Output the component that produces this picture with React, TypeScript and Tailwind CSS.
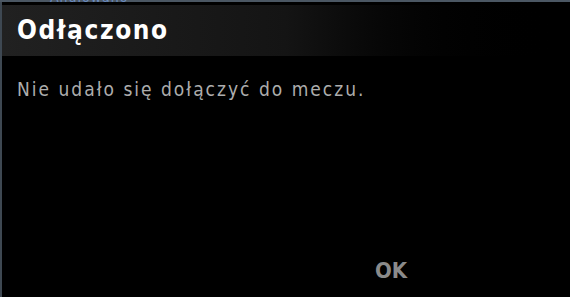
import React from "react";

const App = () => {
    return (
        <div className="w-[570px] h-[297px] bg-black flex flex-col overflow-hidden">
            <div className="h-[2px] bg-[#4b5763] relative">
                <span
                    className="absolute left-[50px] top-[-13px] text-[14px] tracking-[1px] text-[#6a8cc0]"
                    style={{ fontFamily: "'DejaVu Sans Condensed', 'DejaVu Sans', sans-serif" }}
                >
                    Anulowano
                </span>
            </div>
            <div className="flex-1 flex border-l-2 border-[#3e4852]">
                <div className="flex-1 flex flex-col pt-[3px]">
                    <div className="h-[51px] flex items-center pl-[15px] bg-gradient-to-r from-[#212121] via-[#141414] to-black">
                        <span
                            className="text-[26px] font-bold text-white tracking-[1.6px]"
                            style={{ fontFamily: "'DejaVu Sans Condensed', 'DejaVu Sans', sans-serif" }}
                        >
                            Odłączono
                        </span>
                    </div>
                    <div
                        className="pl-[15px] pt-[19px] text-[19px] tracking-[2px] text-[#adadad]"
                        style={{ fontFamily: "'DejaVu Sans Condensed', 'DejaVu Sans', sans-serif" }}
                    >
                        Nie udało się dołączyć do meczu.
                    </div>
                    <div className="flex-1" />
                    <div className="flex pl-[373px] pb-[10px]">
                        <span
                            className="text-[22px] font-bold text-[#8a8a8a]"
                            style={{ fontFamily: "'DejaVu Sans Condensed', 'DejaVu Sans', sans-serif" }}
                        >
                            OK
                        </span>
                    </div>
                </div>
            </div>
        </div>
    );
};

export default App;
